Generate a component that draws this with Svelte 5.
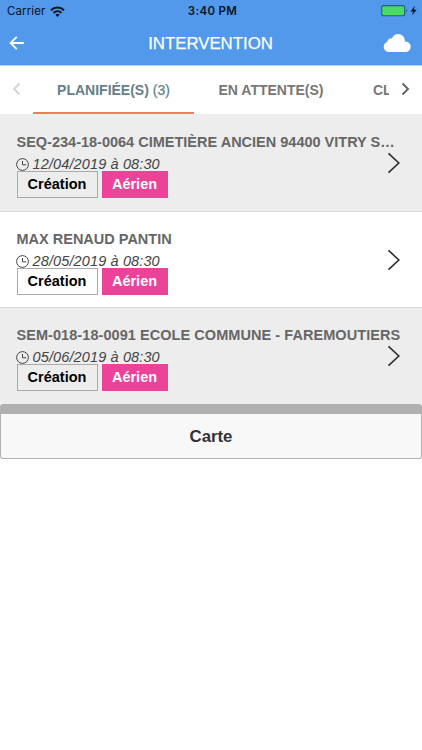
<script>
  const interventions = [
    { title: "SEQ-234-18-0064 CIMETIÈRE ANCIEN 94400 VITRY SUR SEINE", date: "12/04/2019 à 08:30" },
    { title: "MAX RENAUD PANTIN", date: "28/05/2019 à 08:30" },
    { title: "SEM-018-18-0091 ECOLE COMMUNE - FAREMOUTIERS", date: "05/06/2019 à 08:30" }
  ];
</script>

<div class="app">
  <header>
    <div class="status">
      <div class="carrier">
        <span>Carrier</span>
        <svg width="15" height="11" viewBox="0 0 15 11" fill="none" stroke="#08131f" stroke-width="2">
          <path d="M1 4.2C4.6.5 10.4.5 14 4.2" />
          <path d="M3.5 6.8c2.3-2.2 5.7-2.2 8 0" />
          <path d="M5.3 8.6c1.3-1.1 3.1-1.1 4.4 0L7.5 10.9z" fill="#08131f" stroke="none" />
        </svg>
      </div>
      <span class="time">3:40 PM</span>
      <div class="battery">
        <svg width="37" height="12" viewBox="0 0 37 12">
          <rect x=".7" y=".6" width="23" height="10.2" rx="2" fill="#4cd964" stroke="#245c8c" stroke-width="1.1" />
          <path d="M25.2 4v3.6c1.3-.5 1.3-3.1 0-3.6z" fill="#245c8c" />
          <path d="M33.8.8 29.6 6.4h2.6l-1.2 4.2 4.6-5.8h-2.7z" fill="#08131f" />
        </svg>
      </div>
    </div>
    <div class="toolbar">
      <svg class="back" width="15" height="14" viewBox="0 0 15 14" fill="none" stroke="#fff" stroke-width="1.8">
        <path d="M7.7.8 1.6 7l6.1 6.2M1.6 7H14.8" />
      </svg>
      <h1>INTERVENTION</h1>
      <svg class="cloud" width="28" height="19" viewBox="0 0 28 19" fill="#fff">
        <circle cx="6" cy="12.7" r="5.3" />
        <circle cx="8.4" cy="8.4" r="4.2" />
        <circle cx="15.2" cy="6.8" r="6.7" />
        <circle cx="22.4" cy="12.7" r="5.3" />
        <path d="M6 9h16.4v9H6z" />
      </svg>
    </div>
  </header>

  <nav>
    <button class="arrow prev" aria-label="Précédent">
      <svg width="9" height="14" viewBox="0 0 9 14"><path d="M7.5 1.5 2 7l5.5 5.5" /></svg>
    </button>
    <div class="tabs">
      <div class="tab active"><span>PLANIFIÉE(S) <small>(3)</small></span></div>
      <div class="tab waiting"><span>EN ATTENTE(S)</span></div>
      <div class="tab closed"><span>CLOTURÉE(S)</span></div>
    </div>
    <button class="arrow next" aria-label="Suivant">
      <svg width="9" height="14" viewBox="0 0 9 14"><path d="M1.5 1.5 7 7l-5.5 5.5" /></svg>
    </button>
  </nav>

  <main>
    {#each interventions as item}
      <div class="row">
        <h2>{item.title}</h2>
        <div class="date">
          <svg width="13" height="13" viewBox="0 0 13 13" fill="none" stroke="#444" stroke-width="1">
            <circle cx="6.5" cy="6.5" r="5.9" />
            <path d="M6.5 3v3.8h3.7" />
          </svg>
          <em>{item.date}</em>
        </div>
        <div class="badges">
          <span class="badge kind">Création</span>
          <span class="badge network">Aérien</span>
        </div>
        <svg class="chevron" width="14" height="22" viewBox="0 0 14 22" fill="none" stroke="#333" stroke-width="1.7">
          <path d="M1.5 1.3 11.8 11 1.5 20.7" />
        </svg>
      </div>
    {/each}
  </main>

  <button class="map">Carte</button>
</div>

<style>
  :global(body) {
    background: #fff;
  }

  .app {
    width: 422px;
    height: 750px;
    overflow: hidden;
    background: #fff;
    font-family: "Liberation Sans", Arial, sans-serif;
  }

  header {
    height: 65px;
    background: #5299eb;
    border-bottom: 1px solid #b5d5f8;
  }

  .status {
    display: grid;
    grid-template-columns: 1fr 1fr 1fr;
    align-items: center;
    height: 22px;
    padding: 0 4px 0 7px;
    color: #08131f;
    font: 11.5px/22px Inter, sans-serif;
  }

  .carrier {
    display: flex;
    align-items: center;
    gap: 5px;
    letter-spacing: 0.1px;
  }

  .time {
    justify-self: center;
    font-weight: 600;
    letter-spacing: 0.3px;
  }

  .battery {
    display: flex;
    justify-self: end;
  }

  .toolbar {
    display: grid;
    grid-template-columns: 60px 1fr 60px;
    align-items: center;
    height: 43px;
    padding: 0 11px 0 9px;
  }

  h1 {
    margin: 0;
    padding-left: 1px;
    color: #fff;
    font-size: 16.8px;
    font-weight: 400;
    text-align: center;
    -webkit-text-stroke: 0.25px #fff;
  }

  .back {
    margin-top: -2px;
  }

  .cloud {
    justify-self: end;
  }

  nav {
    display: flex;
    height: 48px;
  }

  button {
    font-family: inherit;
  }

  .arrow {
    width: 33px;
    flex: none;
    padding: 0;
    border: 0;
    background: none;
  }

  .arrow path {
    fill: none;
    stroke: #666;
    stroke-width: 2;
  }

  .prev path {
    stroke: #d5d5d5;
  }

  .tabs {
    display: flex;
    width: 356px;
    overflow: hidden;
  }

  .tab {
    box-sizing: border-box;
    flex: none;
    color: #777;
    font-size: 14px;
    font-weight: bold;
    line-height: 49px;
    text-align: center;
    white-space: nowrap;
  }

  .active {
    width: 161px;
    border-bottom: 2px solid #f47c5c;
    color: #65808c;
  }

  small {
    font-size: inherit;
    font-weight: 400;
    -webkit-text-stroke: 0.25px #65808c;
  }

  .waiting {
    width: 154px;
  }

  .closed {
    padding-left: 25px;
  }

  main {
    background: #ededed;
  }

  .row {
    position: relative;
    box-sizing: border-box;
    height: 96px;
    padding: 18px 16px 0 16.5px;
    border-bottom: 1px solid #d9d9d9;
    background: #ededed;
  }

  .row:first-child {
    height: 98px;
    padding-top: 19px;
  }

  .row:nth-child(even) {
    background: #fff;
  }

  .row:last-child {
    border-bottom: 0;
  }

  h2 {
    margin: 0;
    overflow: hidden;
    color: #666;
    font-size: 14.5px;
    line-height: 18px;
    text-overflow: ellipsis;
    white-space: nowrap;
  }

  .row:first-child h2 {
    width: 379px;
  }

  .row:last-child h2 {
    letter-spacing: 0.06px;
  }

  .date {
    display: flex;
    align-items: center;
    gap: 3.5px;
    box-sizing: border-box;
    height: 20px;
    margin-top: 3px;
    margin-left: -0.5px;
    color: #444;
    font-size: 14.5px;
    letter-spacing: 0.13px;
  }

  .badges {
    display: flex;
    gap: 4px;
    margin-top: -3px;
  }

  .badge {
    box-sizing: border-box;
    height: 27px;
    border: 1px solid #aaa;
    color: #000;
    font-size: 14.5px;
    font-weight: bold;
    line-height: 25px;
    text-align: center;
  }

  .kind {
    width: 81px;
  }

  .network {
    width: 66px;
    border-color: #ea4398;
    background: #ea4398;
    color: #fff;
  }

  .chevron {
    position: absolute;
    top: 37px;
    right: 21px;
  }

  .row:first-child .chevron {
    top: 38px;
  }

  .map {
    display: block;
    box-sizing: border-box;
    width: 422px;
    height: 54.5px;
    padding: 0;
    border: 1px solid #b0b0b0;
    border-top-width: 10px;
    border-radius: 3px;
    background: #f8f8f8;
    color: #333;
    font-size: 16.8px;
    font-weight: bold;
    line-height: 45px;
  }
</style>
